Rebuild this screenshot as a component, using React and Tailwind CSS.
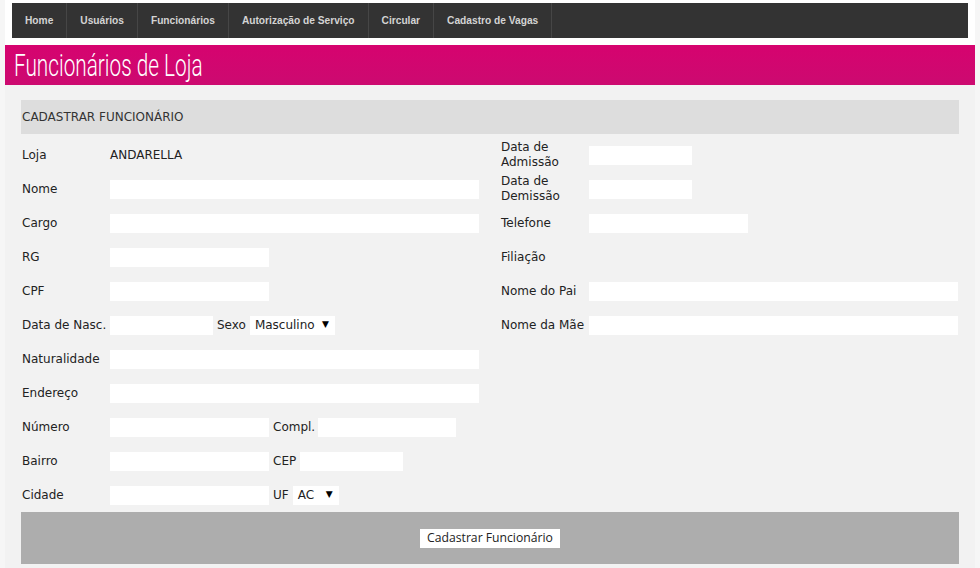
import React from 'react';

const navItems = ['Home', 'Usuários', 'Funcionários', 'Autorização de Serviço', 'Circular', 'Cadastro de Vagas'];

function Field({ w }) {
  return <input type="text" className={`h-[19px] bg-white border-0 outline-none px-1 ${w}`} />;
}

function FakeSelect({ value, w }) {
  return (
    <div className={`h-[19px] bg-white flex items-center justify-between pl-[5px] pr-[6px] ${w}`}>
      <span>{value}</span>
      <span className="text-[9px] text-black">▼</span>
    </div>
  );
}

function Row({ label, children }) {
  return (
    <div className="h-[34px] flex items-center">
      <div className="w-[88px] shrink-0 leading-[15px]">{label}</div>
      <div className="flex items-center">{children}</div>
    </div>
  );
}

export default function App() {
  return (
    <div className="min-h-screen bg-[#f6f6f6] px-[5px]" style={{ fontFamily: '"DejaVu Sans", Verdana, sans-serif' }}>
      {/* top nav */}
      <div className="bg-white pt-[3px] pb-[7px] px-[7px]">
        <nav className="h-[35px] bg-[#333333] flex">
          {navItems.map((item) => (
            <div
              key={item}
              className="h-full flex items-center px-[13px] border-r border-[#464646] text-[10.2px] font-bold text-[#d4d4d4]"
              style={{ fontFamily: '"Liberation Sans", Arial, sans-serif' }}
            >
              {item}
            </div>
          ))}
        </nav>
      </div>

      {/* page title */}
      <div className="h-[40px] bg-gradient-to-b from-[#d6036f] to-[#cc0a70] flex items-center pl-[9px] overflow-hidden">
        <h1
          className="text-white text-[31px] font-light origin-left scale-x-[0.67] whitespace-nowrap leading-none"
          style={{ fontFamily: 'Roboto, "Liberation Sans", sans-serif' }}
        >
          Funcionários de Loja
        </h1>
      </div>

      {/* content */}
      <div className="bg-[#f2f2f2] pt-[15px] px-[16px] pb-[4px] text-[12px] text-[#222]">
        <div className="h-[34px] bg-[#dddddd] flex items-center pl-[1px] text-[#333]">CADASTRAR FUNCIONÁRIO</div>

        <div className="flex mt-[4px] pl-[1px]">
          {/* left column */}
          <div className="w-[479px] shrink-0">
            <Row label="Loja"><span>ANDARELLA</span></Row>
            <Row label="Nome"><Field w="w-[369px]" /></Row>
            <Row label="Cargo"><Field w="w-[369px]" /></Row>
            <Row label="RG"><Field w="w-[159px]" /></Row>
            <Row label="CPF"><Field w="w-[159px]" /></Row>
            <Row label="Data de Nasc.">
              <Field w="w-[103px]" />
              <span className="ml-[4px] mr-[4px]">Sexo</span>
              <FakeSelect value="Masculino" w="w-[85px]" />
            </Row>
            <Row label="Naturalidade"><Field w="w-[369px]" /></Row>
            <Row label="Endereço"><Field w="w-[369px]" /></Row>
            <Row label="Número">
              <Field w="w-[159px]" />
              <span className="ml-[4px] mr-[3px]">Compl.</span>
              <Field w="w-[138px]" />
            </Row>
            <Row label="Bairro">
              <Field w="w-[159px]" />
              <span className="ml-[4px] mr-[4px]">CEP</span>
              <Field w="w-[103px]" />
            </Row>
            <Row label="Cidade">
              <Field w="w-[159px]" />
              <span className="ml-[4px] mr-[4px]">UF</span>
              <FakeSelect value="AC" w="w-[46px]" />
            </Row>
          </div>

          {/* right column */}
          <div className="flex-1">
            <Row label={<>Data de<br />Admissão</>}><Field w="w-[103px]" /></Row>
            <Row label={<>Data de<br />Demissão</>}><Field w="w-[103px]" /></Row>
            <Row label="Telefone"><Field w="w-[159px]" /></Row>
            <Row label="Filiação"><span /></Row>
            <Row label="Nome do Pai"><Field w="w-[369px]" /></Row>
            <Row label="Nome da Mãe"><Field w="w-[369px]" /></Row>
          </div>
        </div>

        <div className="h-[52px] bg-[#adadad] flex items-center justify-center">
          <button
            className="h-[19px] bg-white px-[7px] text-[12.2px] text-[#222] leading-none"
            style={{ fontFamily: '"Open Sans", "Noto Sans", sans-serif' }}
          >
            Cadastrar Funcionário
          </button>
        </div>
      </div>
    </div>
  );
}
